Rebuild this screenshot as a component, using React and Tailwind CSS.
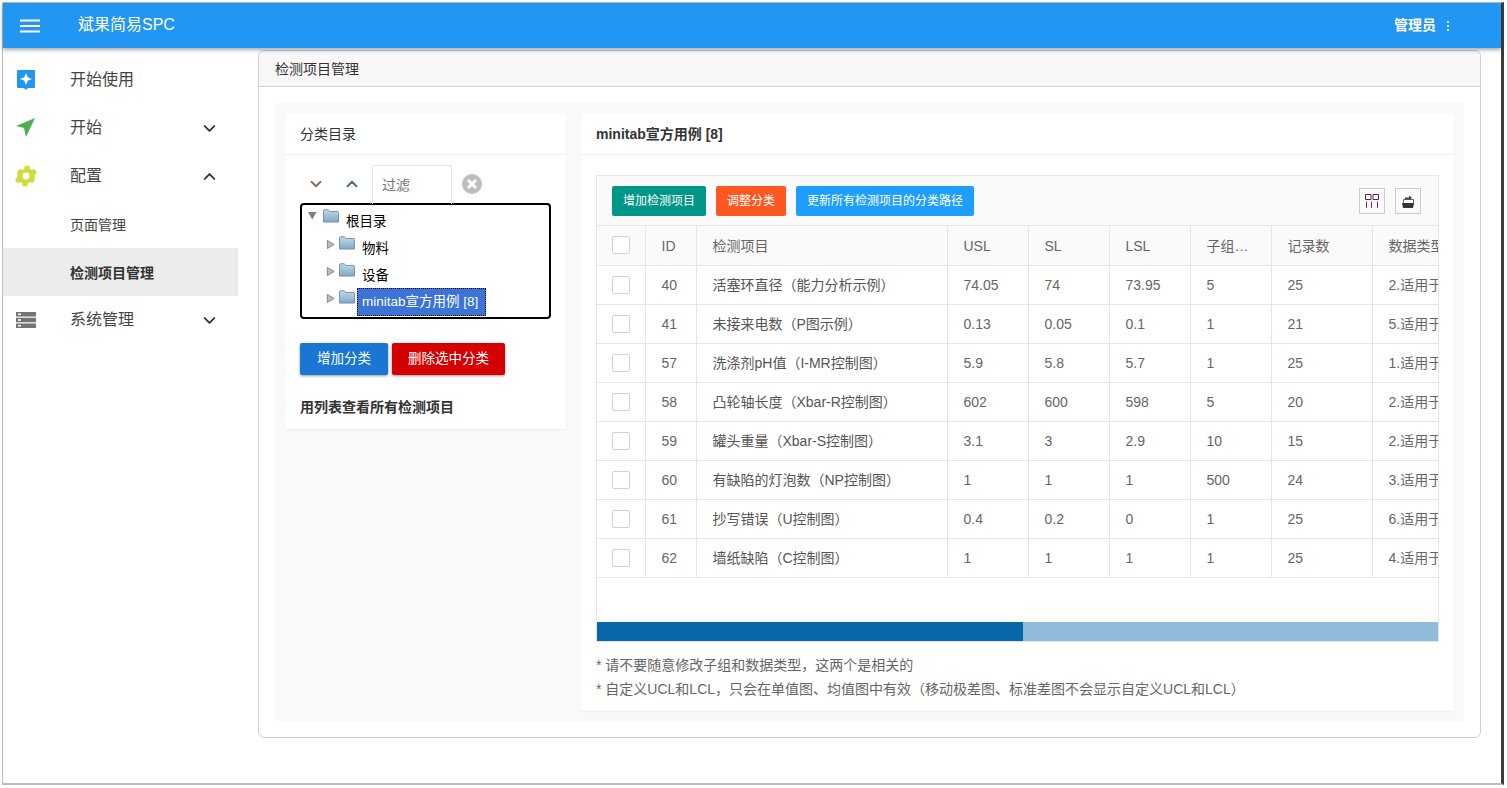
import React from "react";
import { ChevronDown, ChevronUp } from "lucide-react";

const font = "font-['Liberation_Sans','Noto_Sans_CJK_SC',sans-serif]";

const rows = [
  [40, "活塞环直径（能力分析示例）", "74.05", "74", "73.95", "5", "25", "2.适用于"],
  [41, "未接来电数（P图示例）", "0.13", "0.05", "0.1", "1", "21", "5.适用于"],
  [57, "洗涤剂pH值（I-MR控制图）", "5.9", "5.8", "5.7", "1", "25", "1.适用于"],
  [58, "凸轮轴长度（Xbar-R控制图）", "602", "600", "598", "5", "20", "2.适用于"],
  [59, "罐头重量（Xbar-S控制图）", "3.1", "3", "2.9", "10", "15", "2.适用于"],
  [60, "有缺陷的灯泡数（NP控制图）", "1", "1", "1", "500", "24", "3.适用于"],
  [61, "抄写错误（U控制图）", "0.4", "0.2", "0", "1", "25", "6.适用于"],
  [62, "墙纸缺陷（C控制图）", "1", "1", "1", "1", "25", "4.适用于"],
];

function Folder() {
  return (
    <svg width="16" height="14" viewBox="0 0 17 15" className="shrink-0">
      <defs>
        <linearGradient id="fg" x1="0" y1="0" x2="0" y2="1">
          <stop offset="0" stopColor="#c3d9e8" />
          <stop offset="1" stopColor="#7fa8c4" />
        </linearGradient>
      </defs>
      <path d="M.5 14V2Q.5.8 1.6.8h4L7 2.6h8.4q1.1 0 1.1 1.1V14z" fill="url(#fg)" stroke="#6f8fa6" />
    </svg>
  );
}

function Arrow({ open }) {
  return (
    <svg width="9" height="9" viewBox="0 0 10 10" className="shrink-0">
      {open ? <path d="M0 1h9.500L4.700 9.500z" fill="#7d7d7d" /> : <path d="M1.500 0.500 9 5 1.500 9.500z" fill="#bdbdbd" stroke="#808080" />}
    </svg>
  );
}

function TreeRow({ open, label, selected }) {
  return (
    <div className={`flex h-[27px] items-start ${open ? "" : "pl-[18px]"}`}>
      <div className={open ? "mt-[2px]" : "mt-[4px]"}><Arrow open={open} /></div>
      <div className={open ? "ml-[6px]" : "ml-[4px]"}><Folder /></div>
      {selected ? (
        <span className="ml-[2px] -mt-[2px] flex h-[28px] w-[129px] items-center whitespace-nowrap border border-dotted border-black bg-[#3b74d6] pl-[4px] text-[13.500px] leading-none text-white">{label}</span>
      ) : (
        <span className="ml-[7px] mt-[3px] text-[13.500px] leading-[20px] text-black">{label}</span>
      )}
    </div>
  );
}

function Check() {
  return <div className="h-[18px] w-[18px] rounded-[2px] border border-[#d2d2d2] bg-white" />;
}

function Cell({ children, head, dark, check }) {
  return (
    <td className={`h-[39px] overflow-hidden whitespace-nowrap border-r border-b border-[#e6e6e6] text-[14px] ${check ? "px-[15px]" : "pl-[16px] pr-[14px] pt-[2px]"} ${dark ? "text-[#555]" : "text-[#666]"} ${head ? "bg-[#fafafa]" : ""}`}>
      {children}
    </td>
  );
}

function NavItem({ label, icon, chevron }) {
  return (
    <div className="flex h-[48px] items-center">
      <div className="flex w-[46px] justify-center">{icon}</div>
      <span className="ml-[21px] text-[16px]">{label}</span>
      {chevron === "down" && <ChevronDown size={19} strokeWidth={2.4} className="ml-auto mr-[19px] text-[#333]" />}
      {chevron === "up" && <ChevronUp size={19} strokeWidth={2.4} className="ml-auto mr-[19px] text-[#333]" />}
    </div>
  );
}

export default function App() {
  return (
    <div className={`h-[788px] w-[1507px] overflow-hidden bg-white pl-[2px] pt-[2px] ${font}`}>
      <div className="flex h-[783px] w-[1502px] flex-col border-b-2 border-l border-r-[3px] border-t border-b-[#bdbdbd] border-l-[#bdbdbd] border-r-[#3c3c3c] border-t-[#bdbdbd]">
        <header className="relative z-10 flex h-[45px] shrink-0 items-center bg-[#2196f3] text-white shadow-[0_2px_4px_rgba(0,0,0,0.35)]">
          <svg width="20" height="14" viewBox="0 0 20 14" className="ml-[17px]">
            <path d="M0 1.500h20M0 7h20M0 12.500h20" stroke="#fff" strokeWidth="2" />
          </svg>
          <span className="ml-[38px] -mt-[1px] text-[16px]">斌果简易SPC</span>
          <span className="ml-auto text-[14px] font-bold">管理员</span>
          <svg width="4" height="12" viewBox="0 0 4 12" className="ml-[10px] mr-[51px]">
            <circle cx="2" cy="2" r="1.100" fill="#fff" /><circle cx="2" cy="6" r="1.100" fill="#fff" /><circle cx="2" cy="10" r="1.100" fill="#fff" />
          </svg>
        </header>

        <div className="flex min-h-0 flex-1">
          <aside className="w-[235px] shrink-0 pt-[8px] text-[#444]">
            <NavItem label="开始使用" icon={
              <svg width="20" height="22" viewBox="0 0 20 22"><path d="M2 1h16a1 1 0 0 1 1 1v16a1 1 0 0 1-1 1h-6l-2 2-2-2H2a1 1 0 0 1-1-1V2a1 1 0 0 1 1-1z" fill="#2196f3" /><path d="M10 4l1.700 4.300L16 10l-4.300 1.700L10 16l-1.700-4.300L4 10l4.300-1.700z" fill="#fff" /></svg>
            } />
            <NavItem label="开始" chevron="down" icon={
              <svg width="20" height="20" viewBox="0 0 20 20"><path d="M19 0 10 19l-2-9-8-2z" fill="#4caf50" /></svg>
            } />
            <NavItem label="配置" chevron="up" icon={
              <svg width="22" height="22" viewBox="2.500 2.500 19 19"><path fillRule="evenodd" fill="#cddc39" d="M19.400 13a7.500 7.500 0 0 0 0-2l2.100-1.700-2-3.400-2.500 1a7.500 7.500 0 0 0-1.700-1l-.4-2.700h-4l-.4 2.700a7.500 7.500 0 0 0-1.700 1l-2.500-1-2 3.400L4.600 11a7.500 7.500 0 0 0 0 2l-2.100 1.700 2 3.400 2.500-1a7.500 7.500 0 0 0 1.700 1l.4 2.700h4l.4-2.700a7.500 7.500 0 0 0 1.700-1l2.500 1 2-3.400zM12 15a3 3 0 1 1 0-6 3 3 0 0 1 0 6z" /></svg>
            } />
            <div className="flex h-[48px] items-center pl-[67px] pt-[2px] text-[14px]">页面管理</div>
            <div className="flex h-[48px] items-center bg-[#ececec] pl-[67px] pt-[2px] text-[14px] font-bold text-[#333]">检测项目管理</div>
            <NavItem label="系统管理" chevron="down" icon={
              <svg width="20" height="18" viewBox="0 0 20 18"><path fillRule="evenodd" fill="#757575" d="M0 1h20v4.500H0zM0 6.800h20v4.500H0zM0 12.600h20v4.500H0zM2 2.500v1.500h3V2.500zM2 8.300v1.500h3V8.300zM2 14.100v1.500h3v-1.500z" /></svg>
            } />
          </aside>

          <main className="ml-[20px] mt-[2px] h-[688px] w-[1223px] shrink-0 rounded-[6px] border border-[#cfcfcf]">
            <div className="flex h-[36px] items-center rounded-t-[6px] border-b border-[#d2d2d2] bg-[#f8f8f8] pl-[16px] pt-[2px] text-[14px] text-[#333]">检测项目管理</div>
            <div className="mx-[16px] mt-[16px] flex h-[618px] items-start gap-[15px] bg-[#f9f9f9] p-[10px]">
              <section className="h-[316px] w-[281px] shrink-0 rounded-[2px] bg-white shadow-[0_1px_2px_rgba(0,0,0,0.05)]">
                <div className="flex h-[42px] items-center border-b border-[#f0f0f0] pl-[15px] pt-[2px] text-[14px] text-[#333]">分类目录</div>
                <div className="px-[15px] pt-[10px]">
                  <div className="flex h-[38px] items-center">
                    <ChevronDown size={18} strokeWidth={2.500} className="ml-[7px] text-[#8a6d5a]" />
                    <ChevronUp size={18} strokeWidth={2.500} className="ml-[18px] text-[#4a6d80]" />
                    <div className="ml-[11px] flex h-[39px] w-[80px] items-center self-start rounded-t-[2px] border-l border-r border-t border-[#e6e6e6] pl-[9px] text-[14px] text-[#777]">过滤</div>
                    <svg width="20" height="20" viewBox="0 0 20 20" className="ml-[10px]">
                      <circle cx="10" cy="10" r="10" fill="#bdbdbd" />
                      <path d="M6 6l8 8M14 6l-8 8" stroke="#fff" strokeWidth="2.800" />
                    </svg>
                  </div>
                  <div className="h-[116px] w-[251px] rounded-[4px] border-2 border-black bg-white pl-[6px] pt-[4px]">
                    <TreeRow open label="根目录" />
                    <TreeRow label="物料" />
                    <TreeRow label="设备" />
                    <TreeRow label="minitab宣方用例 [8]" selected />
                  </div>
                  <div className="mt-[24px] flex gap-[4px]">
                    <button className="h-[32px] w-[88px] rounded-[2px] bg-[#1976d2] text-[13.500px] text-white shadow-[0_1px_3px_rgba(0,0,0,0.4)]">增加分类</button>
                    <button className="h-[32px] w-[113px] rounded-[2px] bg-[#d50000] text-[13.500px] text-white shadow-[0_1px_3px_rgba(0,0,0,0.4)]">删除选中分类</button>
                  </div>
                  <div className="mt-[22px] text-[14px] font-bold text-[#333]">用列表查看所有检测项目</div>
                </div>
              </section>

              <section className="h-[598px] w-[873px] shrink-0 rounded-[2px] bg-white shadow-[0_1px_2px_rgba(0,0,0,0.05)]">
                <div className="flex h-[42px] items-center border-b border-[#f0f0f0] pl-[15px] pt-[2px] text-[14px] font-bold text-[#333]">minitab宣方用例 [8]</div>
                <div className="ml-[15px] mt-[20px] h-[467px] w-[843px] overflow-hidden border border-[#e6e6e6]">
                  <div className="flex h-[50px] items-center border-b border-[#e6e6e6] bg-[#fafafa] pl-[15px]">
                    <button className="h-[30px] w-[94px] rounded-[2px] bg-[#009688] text-[12px] text-white">增加检测项目</button>
                    <button className="ml-[10px] h-[30px] w-[70px] rounded-[2px] bg-[#ff5722] text-[12px] text-white">调整分类</button>
                    <button className="ml-[10px] h-[30px] w-[178px] rounded-[2px] bg-[#1e9fff] text-[12px] text-white">更新所有检测项目的分类路径</button>
                    <div className="ml-auto flex h-[26px] w-[26px] items-center justify-center border border-[#ccc]">
                      <svg width="14" height="14" viewBox="0 0 14 14" fill="none" stroke="#4a2a5a"><path d="M.5.500h5.500v5H.5zM8 .5h5.500v5H8z" /><path d="M1.500 7.500v6.500M6.500 7.500v6.500M12.500 7.500v6.500" stroke="#8a2a8a" /></svg>
                    </div>
                    <div className="ml-[10px] mr-[17px] flex h-[26px] w-[26px] items-center justify-center border border-[#ccc]">
                      <svg width="14" height="14" viewBox="0 0 14 14"><path d="M2.500 5.500h10v4h-10z" fill="none" stroke="#666" /><path d="M1 9h12l-1 5H2z" fill="#333" /><path d="M4 6V3.500h4V1.500l3 2.500-3 2V5H5.500v1z" fill="#444" /></svg>
                    </div>
                  </div>
                  <table className="w-[895px] table-fixed border-collapse">
                    <colgroup>
                      <col className="w-[48px]" /><col className="w-[51px]" /><col className="w-[251px]" />
                      <col className="w-[81px]" /><col className="w-[81px]" /><col className="w-[81px]" />
                      <col className="w-[81px]" /><col className="w-[101px]" /><col className="w-[120px]" />
                    </colgroup>
                    <tbody>
                      <tr>
                        <Cell head check><Check /></Cell>
                        <Cell head>ID</Cell>
                        <Cell head>检测项目</Cell>
                        <Cell head>USL</Cell>
                        <Cell head>SL</Cell>
                        <Cell head>LSL</Cell>
                        <Cell head>子组…</Cell>
                        <Cell head>记录数</Cell>
                        <Cell head>数据类型</Cell>
                      </tr>
                      {rows.map((r) => (
                        <tr key={r[0]}>
                          <Cell check><Check /></Cell>
                          <Cell>{r[0]}</Cell>
                          <Cell dark>{r[1]}</Cell>
                          {r.slice(2).map((v, i) => <Cell key={i}>{v}</Cell>)}
                        </tr>
                      ))}
                    </tbody>
                  </table>
                  <div className="mt-[44px] flex h-[19px]">
                    <div className="w-[426px] bg-[#0868a9]" />
                    <div className="flex-1 bg-[#90bbdb]" />
                  </div>
                </div>
                <div className="ml-[15px] mt-[11px] text-[14px] leading-[24px] text-[#666]">
                  <p>* 请不要随意修改子组和数据类型，这两个是相关的</p>
                  <p>* 自定义UCL和LCL，只会在单值图、均值图中有效（移动极差图、标准差图不会显示自定义UCL和LCL）</p>
                </div>
              </section>
            </div>
          </main>
        </div>
      </div>
    </div>
  );
}
